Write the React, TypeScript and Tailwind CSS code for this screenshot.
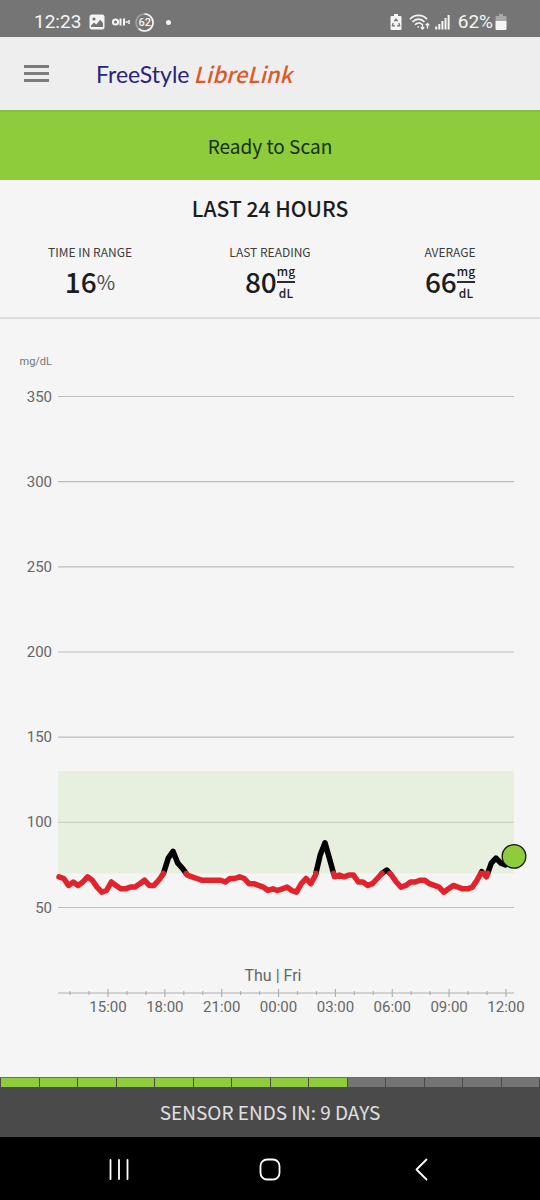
const READINGS = [
  68, 67, 63, 65, 63, 65, 68, 66, 62, 59, 60, 65, 63, 61, 61, 62, 62, 64, 66, 63,
  63, 66, 70, 79, 83, 76, 73, 69, 68, 67, 66, 66, 66, 66, 66, 65, 67, 67, 68, 67,
  64, 64, 63, 62, 60, 61, 60, 61, 62, 60, 59, 64, 67, 64, 69, 81, 88, 78, 68, 69,
  68, 69, 69, 65, 65, 63, 64, 67, 70, 72, 69, 65, 62, 63, 65, 65, 66, 66, 64, 63,
  62, 59, 61, 63, 62, 61, 61, 62, 66, 71, 68, 76, 79, 76, 75, 78, 80,
];

const TARGET_LOW = 70;
const TARGET_HIGH = 130;
const LEVELS = [350, 300, 250, 200, 150, 100, 50];
const HOURS = ["15:00", "18:00", "21:00", "00:00", "03:00", "06:00", "09:00", "12:00"];

const SENSOR_DAYS = 14;
const SENSOR_DAYS_USED = 9;

const LEFT = 58;
const RIGHT = 514;
const AXIS_Y = 674;

type Point = { x: number; v: number };

const yFor = (v: number) => 588.5 - ((v - 50) * 511) / 300;
const xForReading = (i: number) => 59 + (i * (RIGHT + 1 - 59)) / (READINGS.length - 1);
const xForHour = (h: number) => 108 + h * 18.95;

// cut the line wherever it crosses the low target
function splitTrace(values: number[]) {
  const low: Point[][] = [];
  const normal: Point[][] = [];
  let current: Point[] = [{ x: xForReading(0), v: values[0] }];
  let isLow = values[0] <= TARGET_LOW;

  for (let i = 1; i < values.length; i++) {
    const point = { x: xForReading(i), v: values[i] };
    const prev = current[current.length - 1];
    const nextLow = point.v <= TARGET_LOW;
    if (nextLow !== isLow) {
      const t = (TARGET_LOW - prev.v) / (point.v - prev.v);
      const cross = { x: prev.x + t * (point.x - prev.x), v: TARGET_LOW };
      current.push(cross);
      (isLow ? low : normal).push(current);
      current = [cross];
      isLow = nextLow;
    }
    current.push(point);
  }
  (isLow ? low : normal).push(current);
  return { low, normal };
}

const toPoints = (line: Point[]) => line.map((p) => `${p.x.toFixed(1)},${yFor(p.v).toFixed(1)}`).join(" ");

function StatusBar() {
  return (
    <div className="h-[37px] bg-[#757575] text-[#f5f5f5] flex items-center justify-between pl-[34px] pr-[33px] pt-[7px] font-['Roboto',sans-serif]">
      <div className="flex items-center">
        <span className="text-[19px] leading-6">12:23</span>
        <svg className="w-4 h-4 ml-2" viewBox="0 0 16 16">
          <rect x="0.5" y="0.5" width="15" height="15" rx="2.5" fill="#f5f5f5" />
          <circle cx="5" cy="5" r="1.6" fill="#757575" />
          <path d="M2 11.5L5 8.5L7.3 10.5L11.2 5.8L14 9V13H2Z" fill="#757575" />
        </svg>
        <svg className="w-[18px] h-3 ml-[7px]" viewBox="0 0 18 12" fill="none" stroke="#f5f5f5" strokeWidth="2">
          <circle cx="3.5" cy="6" r="2.6" />
          <path d="M8.5 2.5V9.5M12 2.5V9.5" />
          <path d="M13.5 6H16M17 4V8" strokeWidth="1.5" />
        </svg>
        <div className="relative w-[19px] h-[19px] ml-[5px] flex items-center justify-center">
          <svg className="absolute inset-0 w-[19px] h-[19px]" viewBox="0 0 19 19" fill="none" strokeWidth="1.6">
            <circle cx="9.5" cy="9.5" r="8.5" stroke="#a3a3a3" />
            <path d="M9.5 1A8.5 8.5 0 1 1 3.7 15.7" stroke="#f5f5f5" />
          </svg>
          <span className="relative text-[11px] leading-none font-medium">62</span>
        </div>
        <span className="w-[5px] h-[5px] rounded-full bg-[#f5f5f5] ml-3" />
      </div>

      <div className="flex items-center">
        <svg className="w-3 h-4" viewBox="0 0 12 16">
          <path d="M4 0H8V2H10.5Q11.5 2 11.5 3V15Q11.5 16 10.5 16H1.5Q0.5 16 0.5 15V3Q0.5 2 1.5 2H4Z" fill="#f5f5f5" />
          <path d="M4.3 7.4L6 5L7.7 7.4M9 9L9.6 11.8H7M5 11.8H2.4L3.2 9" fill="none" stroke="#757575" strokeWidth="1.3" />
        </svg>
        <svg className="w-[22px] h-4 ml-[7px]" viewBox="0 0 22 16" fill="none" stroke="#f5f5f5" strokeWidth="1.7">
          <path d="M1 5.2C5.5 0.2 13.5 0.2 18 5.2" />
          <path d="M3.5 8C7 4.2 12 4.2 15.5 8" />
          <path d="M6 10.8C8 8.6 11 8.6 13 10.3" />
          <circle cx="9.2" cy="12.8" r="0.9" fill="#f5f5f5" stroke="none" />
          <path d="M13.5 10V15M11.8 13.2L13.5 15L15.2 13.2M18.5 14.5V9.5M16.8 11.2L18.5 9.5L20.2 11.2" strokeWidth="1.3" />
        </svg>
        <svg className="w-[15px] h-4 ml-1" viewBox="0 0 15 16" stroke="#f5f5f5" strokeWidth="2">
          <path d="M1.2 12.5V15.5M4.3 10V15.5M7.4 7V15.5M10.5 4V15.5M13.6 1V15.5" />
        </svg>
        <span className="text-[19px] leading-6 ml-2">62%</span>
        <svg className="w-3 h-4 ml-[2px]" viewBox="0 0 12 16">
          <path d="M4 0H8V2H10.5Q11.5 2 11.5 3V7H0.5V3Q0.5 2 1.5 2H4Z" fill="#a8a8a8" />
          <path d="M0.5 7H11.5V15Q11.5 16 10.5 16H1.5Q0.5 16 0.5 15Z" fill="#f5f5f5" />
        </svg>
      </div>
    </div>
  );
}

function Header() {
  return (
    <header className="h-[73px] bg-[#eeeeee] flex items-center px-6">
      <button type="button" aria-label="Menu" className="w-[25px] h-[17px] flex flex-col justify-between">
        <span className="block w-full h-[3px] bg-[#7c7c7c]" />
        <span className="block w-full h-[3px] bg-[#7c7c7c]" />
        <span className="block w-full h-[3px] bg-[#7c7c7c]" />
      </button>
      <h1 className="ml-[47px] flex items-baseline gap-1 leading-8">
        <span className="text-[23px] text-[#28247c] font-['Lato',sans-serif]">FreeStyle</span>
        <span className="text-[22px] text-[#dc5a2a] italic font-medium">LibreLink</span>
      </h1>
    </header>
  );
}

function Unit() {
  return (
    <span className="flex flex-col items-center text-[12px] leading-4 font-medium">
      <span className="border-b-2 border-[#2c2c2c] pb-[2px]">mg</span>
      <span className="pt-[2px]">dL</span>
    </span>
  );
}

function Stat({ label, value, percent }: { label: string; value: number; percent?: boolean }) {
  return (
    <div className="flex-1 flex flex-col items-center">
      <span className="text-[12px] leading-4 text-[#3c3c3c]">{label}</span>
      <div className="h-11 flex items-center">
        <span className="text-[28px] leading-8 pb-[2px] font-medium">{value}</span>
        {percent ? <span className="text-[20px] leading-6 text-[#4a4a4a]">%</span> : <Unit />}
      </div>
    </div>
  );
}

function Summary() {
  return (
    <section className="h-[139px] border-b-2 border-[#dedede] pt-[14px]">
      <h2 className="text-center text-[21px] leading-7 font-medium">LAST 24 HOURS</h2>
      <div className="flex pt-[22px]">
        <Stat label="TIME IN RANGE" value={16} percent />
        <Stat label="LAST READING" value={80} />
        <Stat label="AVERAGE" value={66} />
      </div>
    </section>
  );
}

function GlucoseChart() {
  const { low, normal } = splitTrace(READINGS);
  const last = READINGS.length - 1;

  return (
    <svg
      className="block w-full h-auto font-['Roboto',sans-serif]"
      viewBox="0 0 540 758"
      role="img"
      aria-label="Glucose over the last 24 hours"
    >
      <text x="52" y="46" textAnchor="end" fontSize="11" fill="#757575">mg/dL</text>

      <rect x={LEFT} y={yFor(TARGET_HIGH)} width={RIGHT - LEFT} height={yFor(TARGET_LOW) - yFor(TARGET_HIGH)} fill="#e7f0df" />

      {LEVELS.map((level) => (
        <g key={level}>
          <line x1={LEFT} x2={RIGHT} y1={yFor(level)} y2={yFor(level)} stroke={level === 100 ? "#c8d0c2" : "#bdbdbd"} strokeWidth="1.2" />
          <text x="52" y={yFor(level) + 5} textAnchor="end" fontSize="15" fill="#666666">{level}</text>
        </g>
      ))}

      <g fill="none" strokeWidth="5.5" strokeLinecap="round" strokeLinejoin="round">
        {normal.map((line, i) => (
          <polyline key={i} points={toPoints(line)} stroke="#000000" />
        ))}
        {low.map((line, i) => (
          <polyline key={i} points={toPoints(line)} stroke="#e3222b" />
        ))}
      </g>
      <circle cx={RIGHT} cy={yFor(READINGS[last])} r="11.8" fill="#8fcc3c" stroke="#111111" strokeWidth="1.3" />

      {/* time axis */}
      <text x="273" y="662" textAnchor="middle" fontSize="16" fill="#666666">Thu | Fri</text>
      <g stroke="#b0b0b0" strokeWidth="1.2">
        <line x1={LEFT} x2={RIGHT} y1={AXIS_Y} y2={AXIS_Y} />
        {Array.from({ length: 24 }, (_, i) => i - 2).map((h) => {
          const size = h % 3 === 0 ? 4 : 2;
          return <line key={h} x1={xForHour(h)} x2={xForHour(h)} y1={AXIS_Y - size} y2={AXIS_Y + size} />;
        })}
      </g>
      {HOURS.map((hour, i) => (
        <text key={hour} x={xForHour(i * 3)} y="693" textAnchor="middle" fontSize="15" fill="#666666">{hour}</text>
      ))}
    </svg>
  );
}

function SensorLife() {
  return (
    <footer className="bg-[#4a4a4a] border-t border-[#6a6a6a]">
      <div className="flex gap-[1px] px-[1px]">
        {Array.from({ length: SENSOR_DAYS }, (_, i) => (
          <span key={i} className={i < SENSOR_DAYS_USED ? "flex-1 h-[9px] bg-[#8fcc3c]" : "flex-1 h-[9px] bg-[#747474]"} />
        ))}
      </div>
      <p className="h-[50px] flex items-center justify-center text-[19px] leading-6 text-[#e0e0e0]">
        SENSOR ENDS IN: 9 DAYS
      </p>
    </footer>
  );
}

function NavBar() {
  return (
    <nav className="bg-black flex-1 min-h-[63px] flex items-center justify-center gap-[127px] text-white">
      <button type="button" aria-label="Recent apps">
        <svg className="w-6 h-6" viewBox="0 0 24 24" fill="none" stroke="currentColor" strokeWidth="1.8" strokeLinecap="round">
          <path d="M3.5 3V22M12 3V22M20.5 3V22" />
        </svg>
      </button>
      <button type="button" aria-label="Home">
        <svg className="w-6 h-6" viewBox="0 0 24 24" fill="none" stroke="currentColor" strokeWidth="1.8">
          <rect x="2.5" y="2.5" width="19" height="20" rx="6.5" />
        </svg>
      </button>
      <button type="button" aria-label="Back">
        <svg className="w-6 h-6" viewBox="0 0 24 24" fill="none" stroke="currentColor" strokeWidth="1.8" strokeLinecap="round" strokeLinejoin="round">
          <path d="M17.5 2.5L7.5 12.5L17.5 22.5" />
        </svg>
      </button>
    </nav>
  );
}

export default function App() {
  return (
    <div className="min-h-screen bg-[#f5f5f5] text-[#1c1c1c] flex flex-col font-['Noto_Sans_CJK_SC',sans-serif]">
      <StatusBar />
      <Header />
      <button type="button" className="h-[70px] w-full bg-[#8fcc3c] border-t-2 border-[#87bc3e] text-[19px] leading-6 text-[#14300c]">
        Ready to Scan
      </button>
      <main>
        <Summary />
        <GlucoseChart />
      </main>
      <SensorLife />
      <NavBar />
    </div>
  );
}
